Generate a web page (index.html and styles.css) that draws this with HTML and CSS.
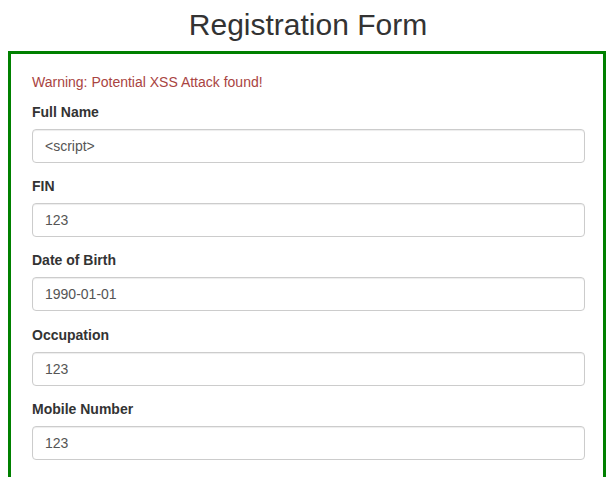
FILE: index.html
```html
<!DOCTYPE html>
<html>
<head>
<meta charset="utf-8">
<title>Registration Form</title>
<link rel="stylesheet" href="styles.css">
</head>
<body>
<div class="page">
  <h2 class="title">Registration Form</h2>
  <form class="form-box">
    <p class="warning">Warning: Potential XSS Attack found!</p>
    <div class="form-group">
      <label class="label">Full Name</label>
      <input class="input" type="text" value="&lt;script&gt;">
    </div>
    <div class="form-group">
      <label class="label">FIN</label>
      <input class="input" type="text" value="123">
    </div>
    <div class="form-group">
      <label class="label">Date of Birth</label>
      <input class="input" type="text" value="1990-01-01">
    </div>
    <div class="form-group">
      <label class="label">Occupation</label>
      <input class="input" type="text" value="123">
    </div>
    <div class="form-group">
      <label class="label">Mobile Number</label>
      <input class="input" type="text" value="123">
    </div>
  </form>
</div>
</body>
</html>
```

FILE: styles.css
```css
* {
  box-sizing: border-box;
}

html {
  margin: 0;
  padding: 0;
}

body {
  margin: 8px;
  padding: 0;
  font-family: "Liberation Sans", Arial, sans-serif;
  font-size: 14px;
  line-height: 1.42857;
  color: #333;
  background: #fff;
}

.page {
  width: 598px;
}

.title {
  margin: 0 0 10px;
  padding-left: 2px;
  font-size: 30px;
  font-weight: 500;
  line-height: 1.1;
  text-align: center;
  color: #333;
}

.form-box {
  margin: 0;
  border: 3px solid #008000;
  padding: 19px 18px 21px 21px;
}

.warning {
  margin: 0 0 10px;
  color: #a94442;
}

.form-group {
  margin-bottom: 14.25px;
}

.label {
  display: inline-block;
  max-width: 100%;
  margin-bottom: 6px;
  font-weight: bold;
}

.input {
  display: block;
  width: 100%;
  height: 34px;
  padding: 6px 12px;
  font-family: "Liberation Sans", Arial, sans-serif;
  font-size: 14px;
  line-height: 1.42857;
  color: #555;
  background: #fff;
  border: 1px solid #ccc;
  border-radius: 4px;
  box-shadow: inset 0 1px 1px rgba(0, 0, 0, 0.075);
  margin: 0;
}
```
